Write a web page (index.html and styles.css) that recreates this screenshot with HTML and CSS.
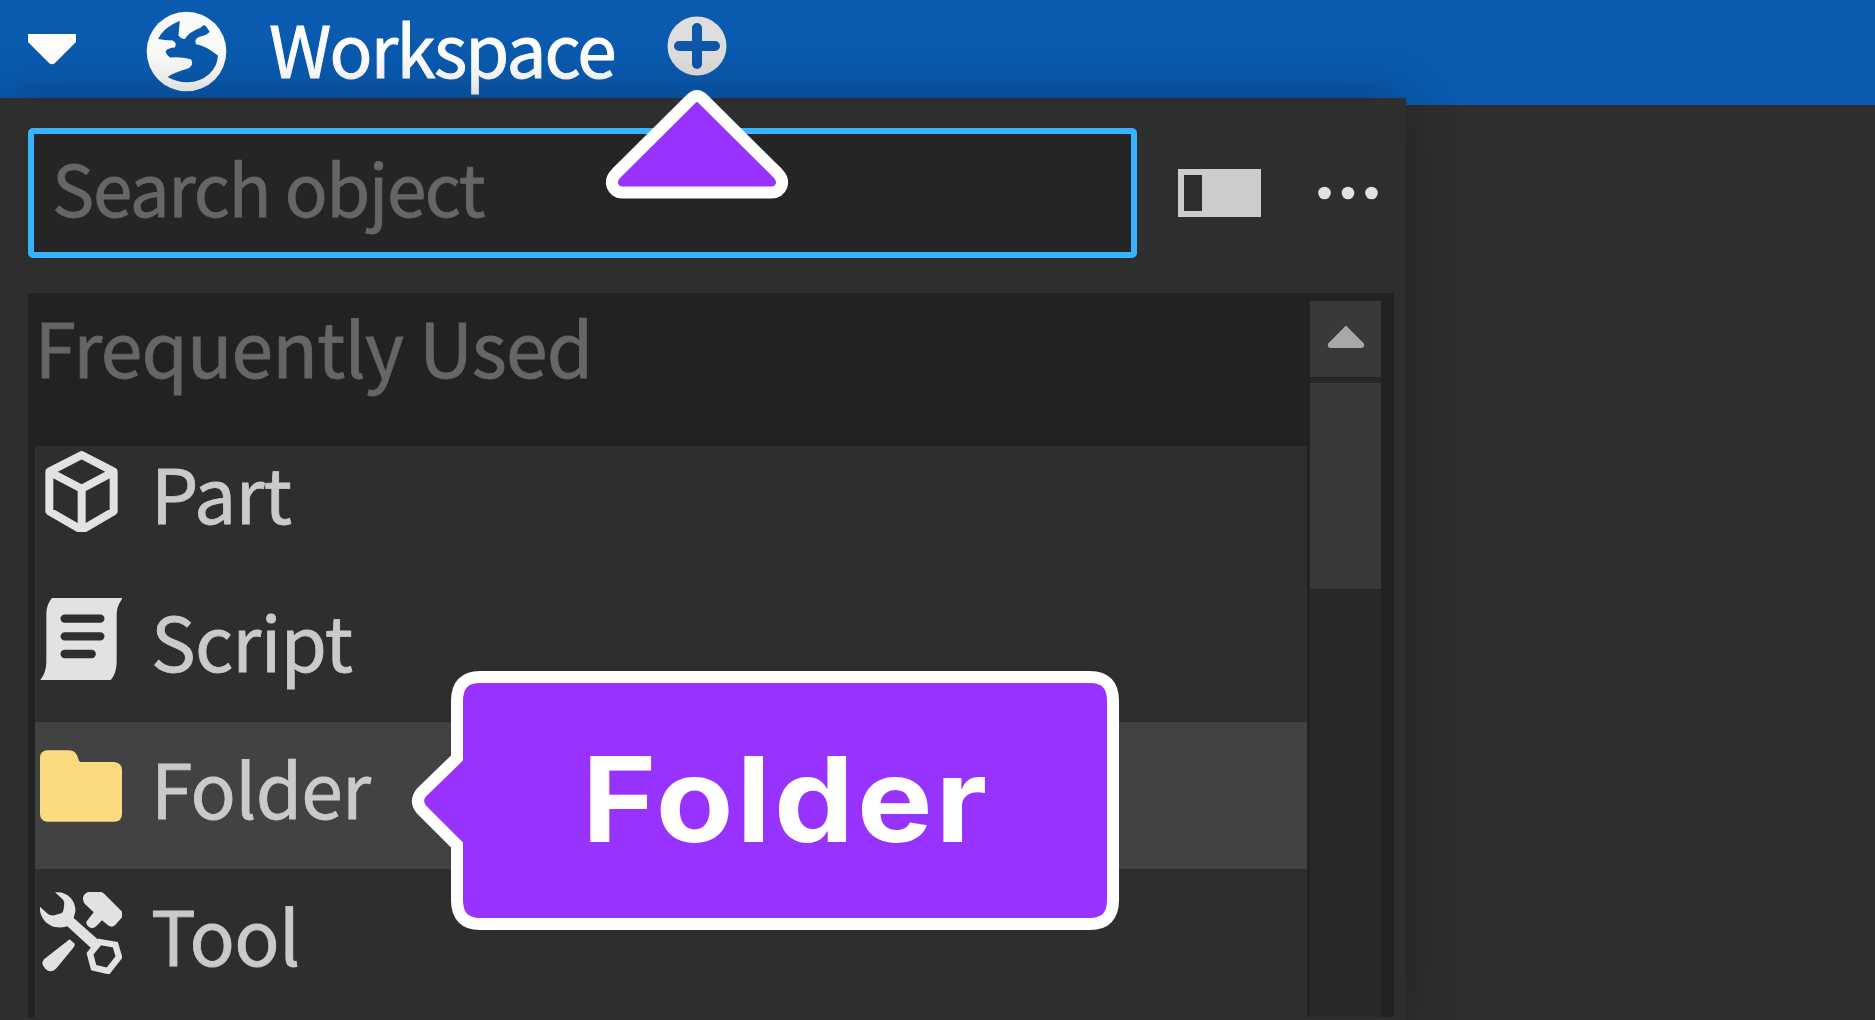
FILE: index.html
```html
<!DOCTYPE html>
<html lang="en">
<head>
<meta charset="utf-8">
<title>Workspace</title>
<link rel="stylesheet" href="styles.css">
</head>
<body>
<main class="explorer">
  <header class="topbar">
    <svg class="caret" viewBox="0 0 48 31"><path d="M0 0H48V8L26.500 29.500Q24 31 21.500 29.500L0 8Z" fill="#fff"/></svg>
    <svg class="globe" viewBox="440 35 242 242"><circle cx="561" cy="156" r="119" fill="#fafafa"/><path d="M476 119Q492 84 541 64L537 108Q547 122 558 117Q564 100 604 84Q614 72 620 82L630 96Q627 105 598 113Q582 122 590 134Q618 138 655 168Q653 201 629 223Q602 247 564 248Q529 247 505 232Q515 222 568 206Q585 192 574 179Q545 171 512 174Q498 163 499 154Q507 145 526 144Q534 131 520 123Q495 123 476 119Z" fill="#0a59ae"/></svg>
    <span class="title">Workspace</span>
    <svg class="add" viewBox="0 0 60 60"><circle cx="30" cy="30" r="29.500" fill="#dedede"/><path d="M30 12V48M12 30H48" stroke="#0d58aa" stroke-width="10" stroke-linecap="round"/></svg>
  </header>
  <section class="panel">
    <div class="tools">
      <div class="search"><span>Search object</span></div>
      <svg class="layout" viewBox="0 0 83 48"><path fill="#ccc" fill-rule="evenodd" d="M0 0H83V48H0ZM6 6V42H24V6Z"/></svg>
      <svg class="more" viewBox="0 0 60 14" fill="#e2e2e2"><circle cx="6.500" cy="7" r="6.300"/><circle cx="30" cy="7" r="6.300"/><circle cx="53.500" cy="7" r="6.300"/></svg>
    </div>
    <div class="list">
      <div class="items">
        <h2 class="group"><span>Frequently Used</span></h2>
        <div class="row first">
          <svg class="icon" viewBox="120 539 246 246"><path d="M245 554L341 604V723L245 779L148 723V604ZM148 604L245 655L341 604M245 655V779" fill="none" stroke="#e2e2e2" stroke-width="24" stroke-linejoin="round"/></svg>
          <span class="name">Part</span>
        </div>
        <div class="row">
          <svg class="icon" viewBox="120 114 246 246"><path d="M156 114H368Q350 138 350 162V307Q349 343 331 361H120Q139 338 139 306V160Q140 132 156 114Z" fill="#e2e2e2"/><path d="M194 176H301M194 229H301M194 282H275" stroke="#2e2e2e" stroke-width="25" stroke-linecap="round"/></svg>
          <span class="name">Script</span>
        </div>
        <div class="row selected">
          <svg class="icon" viewBox="120 555 246 246"><path d="M140 571H207Q228 571 235 596Q237 606 245 606H342Q366 608 366 631V761Q366 785 342 785H142Q120 783 120 762V593Q121 573 140 571Z" fill="#fbdb80"/></svg>
          <span class="name">Folder</span>
        </div>
        <div class="row">
          <svg class="icon" viewBox="120 185 246 246"><g fill="#e2e2e2"><path d="M165 186C200 181 229 210 226 244L221 263L298 331L274 354L202 288Q192 292 174 291C142 289 118 262 119 228L143 250Q151 257 163 255L184 249Q190 246 191 236L193 218Q192 208 183 202Z"/><path d="M267 184H300Q309 185 317 195L365 243Q370 255 365 262L345 285Q335 293 324 285L306 270L286 290Q276 297 267 290Q257 281 259 274L281 246L254 220Q248 212 249 202Q252 188 267 184Z"/><path d="M209 327L224 340Q226 345 220 352L168 415Q151 430 136 415Q121 401 132 387Z"/></g><path d="M299 335L346 343L357 380L324 422L281 412L270 370Z" fill="none" stroke="#e2e2e2" stroke-width="19"/></svg>
          <span class="name">Tool</span>
        </div>
      </div>
      <div class="scrollbar">
        <div class="up"><svg viewBox="0 0 40 24"><path d="M20 2L37 19Q38 22 35 22H5Q2 22 3 19Z" fill="#a8a8a8" stroke="#a8a8a8" stroke-width="2"/></svg></div>
        <div class="thumb"></div>
      </div>
    </div>
  </section>
  <svg class="pointer" viewBox="600 80 194 126"><path d="M691 99Q697 93 703 99L778 173.500C786 182 781 192.500 772 192.500H622C613 192.500 608 182 616 173.500Z" fill="#9832ff" stroke="#fff" stroke-width="12"/></svg>
  <div class="callout">
    <svg viewBox="405 665 720 272"><path d="M480 677H1090Q1113 677 1113 701V900Q1113 924 1090 924H480Q457 924 457 900V845L421 809Q415 801 421 793L457 758V701Q457 677 480 677Z" fill="#9832ff" stroke="#fff" stroke-width="12"/></svg>
    <span class="label">Folder</span>
  </div>
</main>
</body>
</html>
```
FILE: styles.css
```css
* { box-sizing: border-box; }
body { margin: 0; background: #2e2e2e; font-family: "Noto Sans CJK SC", "Noto Sans", sans-serif; }
svg { display: block; flex: none; }
span { white-space: nowrap; }
.explorer { position: relative; width: 1875px; height: 1020px; overflow: hidden; display: flex; flex-direction: column; }
.topbar { flex: none; height: 105px; background: #0a5aaf; display: flex; align-items: flex-start; }
.caret { width: 48px; height: 31px; margin: 34px 0 0 28px; }
.globe { width: 81px; height: 81px; margin: 11px 0 0 70px; }
.title { width: 396px; margin-left: 42px; font-size: 71px; line-height: 94px; letter-spacing: -1.8px; color: #fff; -webkit-text-stroke: 1px #fff; }
.add { width: 60px; height: 60px; margin: 16px 0 0 2px; }
.panel { width: 1406px; height: 922px; margin-top: -7px; padding: 30px 12px 3px 28px; background: #2e2e2e; position: relative; display: flex; flex-direction: column; gap: 35px; box-shadow: 0 0 50px rgba(0,0,0,.28); }
.tools { display: flex; align-items: center; height: 130px; flex: none; }
.search { width: 1109px; height: 130px; border: 6px solid #37b3ff; border-radius: 5px; background: #252525; padding-left: 18px; color: #666; font-size: 71px; line-height: 104px; letter-spacing: -1.4px; -webkit-text-stroke: .8px #666; }
.layout { width: 83px; height: 48px; margin-left: 41px; }
.more { width: 60px; height: 14px; margin-left: 57px; }
.list { flex: 1; display: flex; background: #222; padding-left: 6.500px; }
.items { width: 1272.500px; display: flex; flex-direction: column; }
.group { flex: none; margin: 0; height: 153px; font-size: 75px; font-weight: 400; line-height: 105px; letter-spacing: -.9px; color: #666; -webkit-text-stroke: .8px #666; }
.row { flex: none; height: 147px; padding: 19px 0 38px 5.500px; display: flex; align-items: center; background: #2e2e2e; }
.row.first { height: 128.500px; padding-top: 0; }
.row.selected { background: #424242; }
.row:last-child { height: 148px; padding-bottom: 39px; }
.icon { width: 82px; height: 82px; }
.name { margin-left: 29px; color: #cacaca; font-size: 75px; line-height: 90px; letter-spacing: -.8px; padding-top: 2px; -webkit-text-stroke: .8px #cacaca; }
.scrollbar { width: 71px; margin: 8px 0 0 3px; background: #292929; display: flex; flex-direction: column; gap: 5px; }
.up { height: 77px; background: #393939; border-bottom: 1px solid #222; display: flex; justify-content: center; padding-top: 24px; }
.up svg { width: 40px; height: 24px; }
.thumb { height: 207px; background: #393939; border-bottom: 1px solid #222; }
.pointer { position: absolute; left: 600px; top: 80px; width: 194px; height: 126px; }
.callout { position: absolute; left: 405px; top: 665px; width: 720px; height: 272px; }
.label { position: absolute; left: 177px; top: 64px; font: 700 118px/140px Inter, sans-serif; letter-spacing: 2.800px; transform: scaleX(1.075); transform-origin: left; color: #fff; }
```
